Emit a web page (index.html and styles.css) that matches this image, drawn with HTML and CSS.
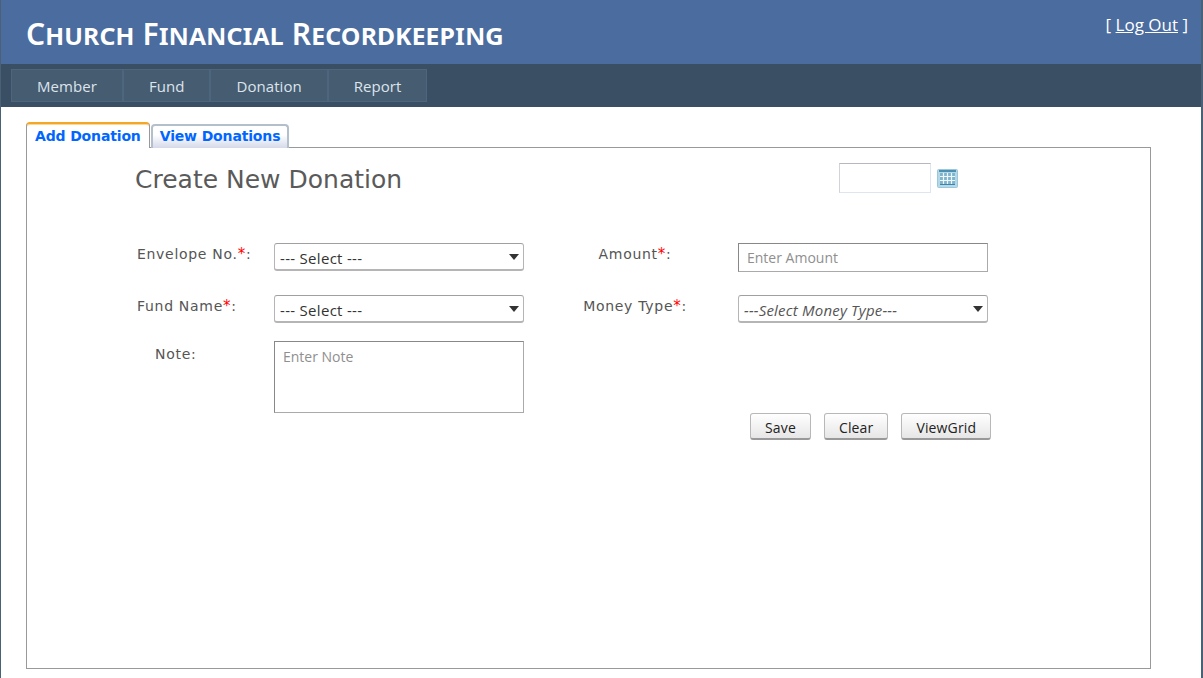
FILE: index.html
```html
<!DOCTYPE html>
<html lang="en">
<head>
  <meta charset="UTF-8">
  <title>Church Financial Recordkeeping</title>
  <link rel="stylesheet" href="styles.css">
</head>
<body>
  <div class="page">
    <header class="header">
      <h1>Church Financial Recordkeeping</h1>
      <div class="login">[ <a href="#">Log Out</a> ]</div>
    </header>

    <nav class="menu">
      <a href="#">Member</a>
      <a href="#">Fund</a>
      <a href="#">Donation</a>
      <a href="#">Report</a>
    </nav>

    <main class="main">
      <div class="tabs">
        <a href="#" class="tab active">Add Donation</a>
        <a href="#" class="tab">View Donations</a>
      </div>

      <div class="panel">
        <div class="title-row">
          <h2>Create New Donation</h2>
          <div class="date-box">
            <input type="text" class="date-input">
            <svg class="cal-icon" width="21" height="19" viewBox="0 0 21 19">
              <rect x="0.5" y="0.5" width="20" height="18" rx="1" fill="#b5d8e8" stroke="#9cc6da"/>
              <rect x="2" y="1" width="17" height="2" fill="#4d8fb0"/>
              <rect x="3" y="4" width="15" height="12" fill="#7fb4cf"/>
              <path d="M6.5 4v12M10.5 4v12M14.5 4v12M3 7.5h15M3 11.5h15" stroke="#eef6fa" stroke-width="1.2"/>
              <rect x="3" y="15" width="15" height="1" fill="#3f84a8"/>
            </svg>
          </div>
        </div>

        <form class="donation-form">
          <label class="lbl">Envelope No.<span class="req">*</span>:</label>
          <div class="select-wrap">
            <select><option>--- Select ---</option></select>
          </div>
          <label class="lbl center">Amount<span class="req">*</span>:</label>
          <input type="text" class="text-input" placeholder="Enter Amount">

          <label class="lbl">Fund Name<span class="req">*</span>:</label>
          <div class="select-wrap">
            <select><option>--- Select ---</option></select>
          </div>
          <label class="lbl center">Money Type<span class="req">*</span>:</label>
          <div class="select-wrap">
            <select class="italic"><option>---Select Money Type---</option></select>
          </div>

          <label class="lbl note-lbl">Note:</label>
          <textarea class="note" placeholder="Enter Note"></textarea>

          <div class="buttons">
            <button type="button">Save</button>
            <button type="button">Clear</button>
            <button type="button">ViewGrid</button>
          </div>
        </form>
      </div>
    </main>
  </div>
</body>
</html>
```

FILE: styles.css
```css
html, body {
  margin: 0;
  padding: 0;
  height: 100%;
  overflow: hidden;
}
body {
  font-family: "Open Sans", "Noto Sans", sans-serif;
  background: #fff;
}
.page {
  height: 678px;
  box-sizing: border-box;
  border-left: 1px solid #496077;
  border-right: 2px solid #496077;
}
.header {
  height: 64px;
  background: #4b6c9e;
  display: flex;
  justify-content: space-between;
  color: #fff;
}
.header h1 {
  margin: 13px 0 0 25px;
  font-family: "Noto Sans", sans-serif;
  font-size: 30px;
  line-height: 42px;
  font-weight: 600;
  font-variant: small-caps;
  letter-spacing: 0.17px;
}
.login {
  margin: 14px 13px 0 0;
  font-size: 17px;
  line-height: 22px;
}
.login a {
  color: #fff;
}
.menu {
  height: 43px;
  box-sizing: border-box;
  background: #3a4f63;
  padding: 5px 0 0 10px;
  display: flex;
}
.menu a {
  height: 33px;
  box-sizing: border-box;
  padding: 0 25px;
  background: #465c71;
  border: 1px solid #4e667d;
  color: #dde4ec;
  font-size: 15px;
  line-height: 33px;
  letter-spacing: 0.06px;
  text-decoration: none;
}
.main {
  padding: 15px 0 0 25px;
}
.tabs {
  display: flex;
  align-items: flex-end;
  height: 26px;
  gap: 1px;
  margin-bottom: -1px;
  position: relative;
}
.tab {
  box-sizing: border-box;
  height: 24px;
  padding: 0 7px;
  font-family: "DejaVu Sans", Verdana, sans-serif;
  font-size: 14px;
  font-weight: bold;
  line-height: 21px;
  letter-spacing: -0.15px;
  color: #0066ff;
  text-decoration: none;
  background: linear-gradient(#fff 40%, #d5d9ea);
  border: 2px solid #b3bfcb;
  border-bottom: 0;
  border-radius: 4px 4px 0 0;
}
.tab.active {
  height: 26px;
  padding: 0 8px;
  line-height: 25px;
  background: #fff;
  border: 1px solid #999;
  border-top: 2px solid #f5a623;
  border-bottom: 0;
  box-shadow: inset 0 1px #fbd79a;
  z-index: 1;
}
.panel {
  width: 1125px;
  height: 522px;
  box-sizing: border-box;
  border: 1px solid #999;
  padding: 16px 0 0 108px;
}
.title-row {
  display: flex;
  justify-content: space-between;
  width: 823px;
  height: 79px;
}
.title-row h2 {
  margin: 0;
  font-family: "DejaVu Sans", Verdana, sans-serif;
  font-size: 25px;
  line-height: 32px;
  font-weight: normal;
  color: #5a5a5a;
}
.date-box {
  display: flex;
  align-items: center;
  gap: 6px;
  height: 30px;
  margin-top: -1px;
}
.date-input {
  width: 92px;
  height: 30px;
  box-sizing: border-box;
  border: 1px solid #dfe5ee;
  border-top-color: #b5b8c0;
  border-left-color: #cfd3da;
  padding: 0;
}
.cal-icon {
  display: block;
  margin-top: 1px;
}
.donation-form {
  display: grid;
  grid-template-columns: 139px 250px 214px 250px;
  grid-template-rows: 52px 46px 72px;
  align-items: start;
}
.lbl {
  font-family: "DejaVu Sans", Verdana, sans-serif;
  font-size: 14px;
  line-height: 20px;
  letter-spacing: 0.7px;
  color: #555;
  padding-left: 2px;
  margin-top: 1px;
}
.lbl.center {
  text-align: center;
  padding-left: 8px;
}
.lbl.note-lbl {
  padding-left: 20px;
  margin-top: 3px;
}
.req {
  color: #f00;
  font-size: 15px;
}
.select-wrap {
  position: relative;
  height: 28px;
}
.select-wrap::after {
  content: "";
  position: absolute;
  right: 5px;
  top: 11px;
  border-top: 6px solid #333;
  border-left: 5px solid transparent;
  border-right: 5px solid transparent;
  pointer-events: none;
}
select {
  appearance: none;
  width: 100%;
  height: 28px;
  box-sizing: border-box;
  padding: 2px 0 0 5px;
  font-family: "Open Sans", "Noto Sans", sans-serif;
  font-size: 15px;
  letter-spacing: 0.3px;
  color: #333;
  background: #fff;
  border: 1px solid #b5b5b5;
  border-top-color: #a0a0a0;
  border-bottom: 2px solid #b5b5b5;
  border-radius: 3px;
}
select.italic {
  font-style: italic;
  letter-spacing: 0.2px;
  color: #555;
}
.text-input {
  width: 250px;
  height: 29px;
  box-sizing: border-box;
  border: 1px solid #aaa;
  border-top-color: #888;
  border-left-color: #888;
  padding: 0 8px;
  font-family: "Open Sans", "Noto Sans", sans-serif;
  font-size: 14px;
}
.note {
  width: 250px;
  height: 72px;
  box-sizing: border-box;
  border: 1px solid #aaa;
  border-top-color: #888;
  border-left-color: #888;
  padding: 5px 8px;
  font-family: "Open Sans", "Noto Sans", sans-serif;
  font-size: 14px;
  resize: none;
}
input::placeholder, textarea::placeholder {
  color: #8f8f8f;
  opacity: 1;
}
.buttons {
  grid-column: 3 / 5;
  grid-row: 4;
  display: flex;
  gap: 13px;
  margin-left: 226px;
  white-space: nowrap;
}
.buttons button {
  height: 27px;
  padding: 3px 14px 0;
  font-family: "Open Sans", "Noto Sans", sans-serif;
  font-size: 14px;
  letter-spacing: 0.15px;
  color: #222;
  background: linear-gradient(#fff, #e6e6e6);
  border: 1px solid #b8b8b8;
  border-bottom: 2px solid #999;
  border-radius: 3px;
}
```
